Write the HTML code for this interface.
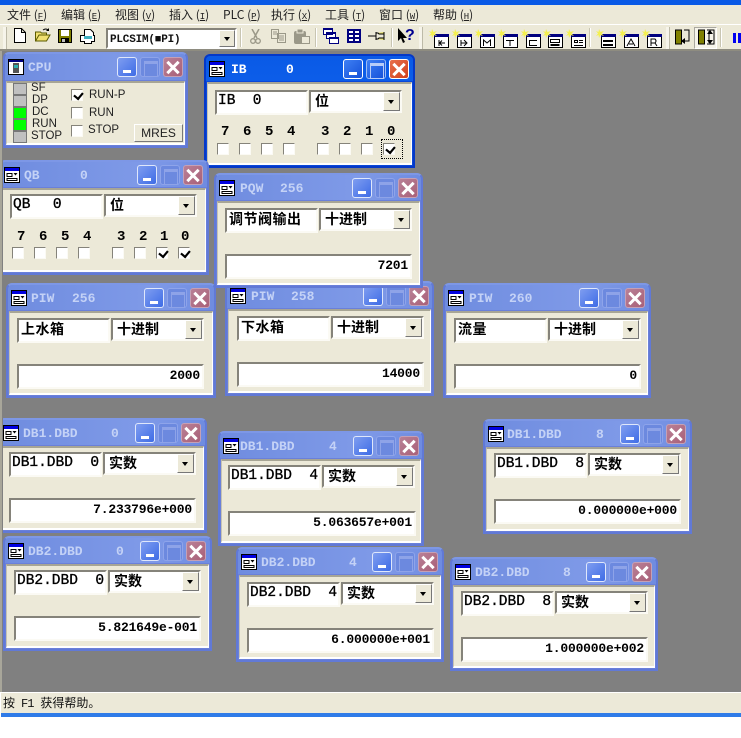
<!DOCTYPE html>
<html><head><meta charset="utf-8"><style>
*{box-sizing:border-box}
html,body{margin:0;padding:0;background:#fff}
body{width:741px;height:738px;position:relative;overflow:hidden;font-family:"Liberation Sans","WenQuanYi Zen Hei",sans-serif}
#top{position:absolute;left:0;top:0;width:741px;height:5px;background:#0a5ae6}
#menu{position:absolute;left:0;top:5px;width:741px;height:20px;background:#ece9d8;border-bottom:1px solid #fff}
#menu span{position:absolute;top:2px;font:12px/15px "WenQuanYi Zen Hei","Noto Sans CJK SC",sans-serif;color:#222;white-space:pre}
#menu u{font-family:"Liberation Mono",monospace;font-size:9px}
#tb{position:absolute;left:0;top:25px;width:741px;height:26px;background:#ece9d8;border-bottom:2px solid #8e8c80}
.sep{position:absolute;top:3px;width:2px;height:19px;background:#c8c5b2;border-right:1px solid #fff}
.gr{position:absolute;top:2px;width:4px;height:22px;background:#f6f4ea;border-right:1px solid #bdbaa8}
#tb svg{position:absolute}
#combo{position:absolute;left:106px;top:3px;width:131px;height:21px;background:#fff;border:2px solid;border-color:#85837a #fff #fff #85837a;font:bold 11px/20px "Liberation Mono",monospace;padding-left:2px;color:#111;letter-spacing:-.2px}
#combo i{position:absolute;right:0;top:0;width:16px;height:17px;background:#ece9d8;border:1px solid;border-color:#fff #777 #777 #fff}
#combo i:after,.cb i:after{content:"";position:absolute;left:4px;top:6px;border:3.5px solid transparent;border-top:4px solid #000;border-bottom:0}
#mdi{position:absolute;left:0;top:51px;width:741px;height:641px;background:#808080;overflow:hidden;border-left:2px solid #a8a69a}
#clip{position:absolute;left:3px;top:51px;width:738px;height:641px;overflow:hidden}
#stb{position:absolute;left:1px;top:692px;width:740px;height:21px;background:#ece9d8;border-top:1px solid #fff;font:12px/20px "WenQuanYi Zen Hei","Noto Sans CJK SC",sans-serif;color:#111;padding-left:2px;white-space:pre}
#stb span{font-family:"Liberation Mono",monospace;font-size:12px;margin:0 7px 0 6px;letter-spacing:-1px}
#bb{position:absolute;left:1px;top:713px;width:740px;height:4px;background:#2f7be8}
.w{position:absolute;width:210px;height:115px;border-radius:6px 6px 0 0;background:linear-gradient(90deg,#6f8cdf,#7f9ae8 70%,#6f8ce0);border:2px solid #6179d6;border-top-color:#7d97e6}
.w .c{position:absolute;left:1px;right:1px;top:26px;bottom:1px;background:#ece9d8;border-top:2px solid #a7a595;border-left:1px solid #c6c3b2;border-bottom:2px solid #fff;border-right:1px solid #fff;box-shadow:0 0 0 1px #6a80da}
.a{background:linear-gradient(180deg,#0a5ae6,#0f63ee 60%,#0a55dc);border-color:#0438c8}
.a .c{box-shadow:0 0 0 1px #0a48d8}
.ic{position:absolute;left:3px;top:5px;width:16px;height:16px}
.tt{position:absolute;top:6px;font:bold 13px/15px "Liberation Mono",monospace;color:#c4d2f6;white-space:pre}
.a .tt{color:#fff}
.b{position:absolute;top:3px;width:20px;height:20px;border-radius:3px;border:1px solid #a9bdf2}
.b1{left:136px;background:linear-gradient(135deg,#7f9df0,#3e6ce6);border-color:#dfe7fb}
.b2{left:159px;background:#6c89df;border-color:#8ea4ea}
.b3{left:182px;background:linear-gradient(135deg,#b98096,#a96078);border-color:#c5a0b5}
.b1:after{content:"";position:absolute;left:5px;bottom:3px;width:8px;height:3px;background:#fff}
.b2:after{content:"";position:absolute;left:3px;top:3px;width:12px;height:12px;border:1px solid #8ea3e8;border-top-width:3px}
.b3:before,.b3:after{content:"";position:absolute;left:1px;top:7.5px;width:16px;height:3px;background:#fff;transform:rotate(45deg)}
.b3:after{transform:rotate(-45deg)}
.a .b1{background:linear-gradient(135deg,#3f80f4,#1450d8);border-color:#fff}
.a .b2{background:linear-gradient(135deg,#3f80f4,#1450d8);border-color:#9cbcf4}
.a .b2:after{border-color:#b8cdf8}
.a .b3{background:linear-gradient(135deg,#e8704c,#d0401c);border-color:#fff}
.f{position:absolute;background:#fff;border:2px solid;border-color:#85837a #fbfaf4 #fbfaf4 #85837a;color:#000;white-space:pre;overflow:hidden}
.n{left:9px;top:7px;width:93px;height:25px;font:14.5px/18px "Liberation Mono",monospace;padding:0 0 0 1px;-webkit-text-stroke:.35px #000}
.z{font:bold 14px/18px "WenQuanYi Zen Hei","Noto Sans CJK SC",sans-serif;padding-left:2px;letter-spacing:.5px;-webkit-text-stroke:0}
.cb{left:103px;top:7px;width:93px;height:23px;font:bold 14px/19px "WenQuanYi Zen Hei","Noto Sans CJK SC",sans-serif;padding-left:4px}
.cb i{position:absolute;right:0;top:0;width:17px;height:19px;background:#ece9d8;border:1px solid;border-color:#fff #777 #777 #fff}
.cb i:after{left:4px;top:7px}
.v{left:9px;top:53px;width:187px;height:25px;text-align:right;font:bold 13px/19px "Liberation Mono",monospace;padding-right:2px;letter-spacing:-.2px}
.k{position:absolute;width:12px;height:12px;background:#fff;border:1px solid;border-color:#85837a #fbfaf4 #fbfaf4 #85837a;outline:1px solid #ece9d8}
.k.x:after{content:"";position:absolute;left:2px;top:-1px;width:6px;height:9px;border:solid #000;border-width:0 3px 3px 0;transform:rotate(40deg) scale(.72)}
.l{position:absolute;font:bold 14px/14px "Liberation Mono",monospace;color:#000}
.cpu{position:absolute;font:11.5px/12px "Liberation Sans",sans-serif;color:#222}
.led{position:absolute;width:14px;height:12px;background:#c0c0c0;border:1px solid #777}
.g{background:#00ff00}
</style></head><body>
<svg width="0" height="0" style="position:absolute"><defs>
<symbol id="wi" viewBox="0 0 16 16"><rect x=".5" y=".5" width="15" height="15" fill="#fff" stroke="#000"/><rect x="1" y="1" width="14" height="3" fill="#0000e0"/><path d="M3 6.5h5v3H3zM3 11.5h10v2H3z" fill="none" stroke="#000"/><path d="M9.500 6h4l-2 2.500z" fill="#000"/></symbol>
<symbol id="star" viewBox="0 0 20 20"><path d="M5.500 6.500h14v12h-14z" fill="#fff" stroke="#000"/><rect x="5" y="5" width="15" height="3" fill="#000080"/><path d="M3 0l1.500 3L8 2 5.500 4.500 8 7 4.500 6 3 9 2.500 6 0 7l2-2.500L0 2l2.500 1z" fill="#f4f050"/></symbol>
</defs></svg>
<div id="top"></div>
<div id="menu">
<span style="left:7px">文件 (<u>F</u>)</span><span style="left:61px">编辑 (<u>E</u>)</span><span style="left:115px">视图 (<u>V</u>)</span><span style="left:169px">插入 (<u>I</u>)</span><span style="left:223px">PLC (<u>P</u>)</span><span style="left:271px">执行 (<u>X</u>)</span><span style="left:325px">工具 (<u>T</u>)</span><span style="left:379px">窗口 (<u>W</u>)</span><span style="left:433px">帮助 (<u>H</u>)</span>
</div>
<div id="tb">
<div class="gr" style="left:3px"></div>
<svg style="left:14px;top:3px" width="12" height="15"><path d="M.5.5h7l4 4v10H.5zM7.500.5v4h4" fill="#fff" stroke="#000"/></svg>
<svg style="left:35px;top:3px" width="16" height="14"><path d="M.5 13V4h5l1 1h5v2H4L.5 13h11L15 7H4" fill="#f0e070" stroke="#5a5a00"/><path d="M8 2q3-2 5 0" fill="none" stroke="#000"/><path d="M14 0v3h-3z"/></svg>
<svg style="left:58px;top:4px" width="14" height="14"><rect width="14" height="14" fill="#000"/><rect x="1" y="1" width="12" height="12" fill="#808000"/><rect x="3" y="1" width="8" height="6" fill="#fff"/><rect x="3" y="9" width="8" height="5" fill="#000"/><rect x="4" y="10" width="3" height="3" fill="#c0c0c0"/></svg>
<svg style="left:80px;top:4px" width="15" height="15"><path d="M4.500.5h6l3 3v3h1v6h-3v2h-7v-2H.5v-6h4z" fill="#fff" stroke="#000"/><rect x="4" y="7" width="8" height="3" fill="#40b0c0"/></svg>
<div id="combo">PLCSIM(■PI)<i></i></div>
<div class="sep" style="left:240px"></div>
<svg style="left:250px;top:4px" width="11" height="15"><path d="M2 0l5 9M9 0L4 9" stroke="#9a9888" fill="none" stroke-width="1.500"/><circle cx="3" cy="12" r="2.300" fill="none" stroke="#9a9888" stroke-width="1.300"/><circle cx="8" cy="12" r="2.300" fill="none" stroke="#9a9888" stroke-width="1.300"/></svg>
<svg style="left:271px;top:4px" width="16" height="14"><path d="M.5.5h7v9h-7zM6.500 4.500h8v9h-8z" fill="#ece9d8" stroke="#9a9888"/><path d="M8 7h5M8 9h5M8 11h5M2 3h4M2 5h4" stroke="#9a9888"/></svg>
<svg style="left:294px;top:4px" width="16" height="15"><rect y="2" width="12" height="13" rx="2" fill="#9a9888"/><rect x="3" width="6" height="4" fill="#9a9888" stroke="#ece9d8"/><rect x="7.500" y="7.500" width="8" height="7" fill="#ece9d8" stroke="#9a9888"/></svg>
<div class="sep" style="left:315px"></div>
<svg style="left:323px;top:3px" width="16" height="16"><g fill="#fff" stroke="#000080"><path d="M.5.5h9v6h-9zM3.500 4.500h9v6h-9zM6.500 9.500h9v6h-9z"/></g><path d="M0 0h10v2H0zM3 4h10v2H3zM6 9h10v2H6z" fill="#000080"/></svg>
<svg style="left:347px;top:4px" width="14" height="14"><rect x="1" y="1" width="12" height="12" fill="#fff" stroke="#000080" stroke-width="2"/><path d="M1 5h12M1 9h12M7 1v12" stroke="#000080" stroke-width="2"/></svg>
<svg style="left:368px;top:6px" width="17" height="10"><path d="M0 5h8" stroke="#000"/><path d="M8 1v8M8 2h2l1 1h5V1M8 8h2l1-1h5v2M16 1v8" stroke="#000" fill="#e8e070"/></svg>
<div class="sep" style="left:391px"></div>
<svg style="left:398px;top:3px" width="17" height="17"><path d="M0 0v13l3-3 2 5 2-1-2-4h4z" fill="#000"/><text x="7" y="12" font-family="Liberation Sans" font-weight="bold" font-size="16" fill="#000090">?</text></svg>
<div class="gr" style="left:419px"></div>
<svg style="left:429px;top:4px" width="20" height="20"><use href="#star"/><path d="M10 11v6M16 14h-5M13 11.500L10.500 14l2.500 2.500" fill="none" stroke="#000"/></svg>
<svg style="left:452px;top:4px" width="20" height="20"><use href="#star"/><path d="M9 11v6M9 14h5M12 11l3 3-3 3" fill="none" stroke="#000"/></svg>
<svg style="left:475px;top:4px" width="20" height="20"><use href="#star"/><path d="M8.500 17v-6l3.500 3 3.500-3v6" fill="none" stroke="#000"/></svg>
<svg style="left:498px;top:4px" width="20" height="20"><use href="#star"/><path d="M8 11.500h8M12 11.500v5.500" fill="none" stroke="#000"/></svg>
<svg style="left:521px;top:4px" width="20" height="20"><use href="#star"/><path d="M16 11.500H8.500v5H16" fill="none" stroke="#000"/></svg>
<svg style="left:543px;top:4px" width="20" height="20"><use href="#star"/><rect x="7.500" y="10.500" width="9" height="3" fill="none" stroke="#000"/><rect x="7.500" y="15" width="9" height="2" fill="#000"/></svg>
<svg style="left:566px;top:4px" width="20" height="20"><use href="#star"/><path d="M8.500 11.500h3v2h-3zM13 11.500h4M13 13.500h4M8 16.500h9" fill="none" stroke="#000"/></svg>
<div class="sep" style="left:589px"></div>
<svg style="left:596px;top:4px" width="20" height="20"><use href="#star"/><path d="M7 11h10v2H7zM7 15h10v2H7z"/></svg>
<svg style="left:619px;top:4px" width="20" height="20"><use href="#star"/><path d="M8 17l4-7 4 7M10 15h4" fill="none" stroke="#000"/></svg>
<svg style="left:642px;top:4px" width="20" height="20"><use href="#star"/><path d="M9 17v-7h4q2 2 0 4H9m4 0l2 3" fill="none" stroke="#000"/></svg>
<div class="gr" style="left:666px"></div>
<svg style="left:675px;top:4px" width="16" height="16"><rect x=".5" y="1" width="6" height="14" fill="#808000" stroke="#000"/><path d="M9 1h5v11H9" fill="none" stroke="#000"/><path d="M6 12l4-3v6z"/></svg>
<div style="position:absolute;left:694px;top:2px;width:23px;height:22px;background:#f6f4ea;border:1px solid;border-color:#aaa8a0 #fff #fff #aaa8a0"></div>
<svg style="left:698px;top:4px" width="18" height="17"><rect x=".5" y="1" width="6" height="14" fill="#808000" stroke="#000"/><path d="M9 1h7v14H9M11 2v12" fill="none" stroke="#000"/><path d="M11 1l3 4H8zM11 15l3-4H8z" transform="translate(1 0)"/></svg>
<div class="sep" style="left:720px"></div>
<div style="position:absolute;left:733px;top:8px;width:3px;height:10px;background:#0000f0"></div><div style="position:absolute;left:738px;top:8px;width:3px;height:10px;background:#0000f0"></div>
</div>
<div id="mdi"></div>
<div id="clip"><div style="position:absolute;left:-3px;top:-51px;width:741px;height:738px">

<div class="w" style="left:3px;top:52px;width:185px;height:96px">
<svg class="ic" style="left:3px" viewBox="0 0 16 16"><rect x=".5" y=".5" width="15" height="15" fill="#fff" stroke="#000"/><rect x="1" y="1" width="14" height="2" fill="#000080"/><rect x="5" y="4" width="6" height="10" fill="#555"/><rect x="6" y="6" width="4" height="3" fill="#30b0b0"/></svg>
<span class="tt" style="left:23px">CPU</span>
<div class="b b1" style="left:112px"></div><div class="b b2" style="left:135px"></div><div class="b b3" style="left:158px"></div>
<div class="c" style="top:27px"></div>
<div class="led" style="left:8px;top:29px"></div><div class="led" style="left:8px;top:41px"></div><div class="led g" style="left:8px;top:53px"></div><div class="led g" style="left:8px;top:65px"></div><div class="led" style="left:8px;top:77px"></div>
<span class="cpu" style="left:26px;top:28px">SF</span><span class="cpu" style="left:27px;top:40px">DP</span><span class="cpu" style="left:27px;top:52px">DC</span><span class="cpu" style="left:27px;top:64px">RUN</span><span class="cpu" style="left:26px;top:76px">STOP</span>
<div class="k x" style="left:66px;top:35px"></div><div class="k" style="left:66px;top:53px"></div><div class="k" style="left:66px;top:71px"></div>
<span class="cpu" style="left:84px;top:35px">RUN-P</span><span class="cpu" style="left:84px;top:53px">RUN</span><span class="cpu" style="left:83px;top:70px">STOP</span>
<div style="position:absolute;left:129px;top:70px;width:49px;height:18px;background:#ece9d8;border:1px solid;border-color:#fff #777 #777 #fff;text-align:center;font:12px/16px 'Liberation Sans',sans-serif;color:#222">MRES</div>
</div>

<div class="w a" style="left:204px;top:54px;width:211px;height:114px">
<svg class="ic"><use href="#wi"/></svg><span class="tt" style="left:25px">IB</span><span class="tt" style="left:80px">0</span>
<div class="b b1" style="left:137px"></div><div class="b b2" style="left:160px"></div><div class="b b3" style="left:183px"></div>
<div class="c"></div>
<div class="f n" style="left:9px;top:34px">IB  0</div><div class="f cb" style="left:103px;top:34px">位<i></i></div>
<span class="l" style="left:15px;top:69px">7</span><span class="l" style="left:37px;top:69px">6</span><span class="l" style="left:59px;top:69px">5</span><span class="l" style="left:81px;top:69px">4</span><span class="l" style="left:115px;top:69px">3</span><span class="l" style="left:137px;top:69px">2</span><span class="l" style="left:159px;top:69px">1</span><span class="l" style="left:181px;top:69px">0</span>
<div class="k" style="left:11px;top:87px"></div><div class="k" style="left:33px;top:87px"></div><div class="k" style="left:55px;top:87px"></div><div class="k" style="left:77px;top:87px"></div><div class="k" style="left:111px;top:87px"></div><div class="k" style="left:133px;top:87px"></div><div class="k" style="left:155px;top:87px"></div><div class="k x" style="left:177px;top:87px"></div>
<div style="position:absolute;left:175px;top:83px;width:22px;height:20px;border:1px dotted #000"></div>
</div>

<div class="w" style="left:-1px;top:160px;height:115px">
<svg class="ic"><use href="#wi"/></svg><span class="tt" style="left:23px">QB</span><span class="tt" style="left:79px">0</span>
<div class="b b1"></div><div class="b b2"></div><div class="b b3"></div><div class="c"></div>
<div class="f n" style="left:9px;top:32px">QB  <span style="margin-left:5px">0</span></div><div class="f cb" style="top:32px">位<i></i></div>
<span class="l" style="left:16px;top:68px">7</span><span class="l" style="left:38px;top:68px">6</span><span class="l" style="left:60px;top:68px">5</span><span class="l" style="left:82px;top:68px">4</span><span class="l" style="left:116px;top:68px">3</span><span class="l" style="left:138px;top:68px">2</span><span class="l" style="left:159px;top:68px">1</span><span class="l" style="left:180px;top:68px">0</span>
<div class="k" style="left:11px;top:85px"></div><div class="k" style="left:33px;top:85px"></div><div class="k" style="left:55px;top:85px"></div><div class="k" style="left:77px;top:85px"></div><div class="k" style="left:111px;top:85px"></div><div class="k" style="left:133px;top:85px"></div><div class="k x" style="left:155px;top:85px"></div><div class="k x" style="left:177px;top:85px"></div>
</div>

<div class="w" style="left:225px;top:281px;width:209px"><svg class="ic"><use href="#wi"/></svg><span class="tt" style="left:24px">PIW</span><span class="tt" style="left:64px">258</span><div class="b b1"></div><div class="b b2"></div><div class="b b3"></div><div class="c"></div><div class="f n z" style="left:10px;top:33px">下水箱</div><div class="f cb" style="left:104px;top:33px">十进制<i></i></div><div class="f v" style="left:10px;top:79px">14000</div></div>

<div class="w" style="left:214px;top:173px;width:209px"><svg class="ic"><use href="#wi"/></svg><span class="tt" style="left:24px">PQW</span><span class="tt" style="left:64px">256</span><div class="b b1"></div><div class="b b2"></div><div class="b b3"></div><div class="c"></div><div class="f n z" style="left:9px;top:33px">调节阀输出</div><div class="f cb" style="left:103px;top:33px">十进制<i></i></div><div class="f v" style="left:9px;top:79px">7201</div></div>

<div class="w" style="left:6px;top:283px"><svg class="ic"><use href="#wi"/></svg><span class="tt" style="left:23px">PIW</span><span class="tt" style="left:64px">256</span><div class="b b1"></div><div class="b b2"></div><div class="b b3"></div><div class="c"></div><div class="f n z" style="top:33px">上水箱</div><div class="f cb" style="top:33px">十进制<i></i></div><div class="f v" style="top:79px">2000</div></div>

<div class="w" style="left:443px;top:283px;width:208px"><svg class="ic"><use href="#wi"/></svg><span class="tt" style="left:24px">PIW</span><span class="tt" style="left:64px">260</span><div class="b b1" style="left:134px"></div><div class="b b2" style="left:157px"></div><div class="b b3" style="left:180px"></div><div class="c"></div><div class="f n z" style="top:33px">流量</div><div class="f cb" style="top:33px">十进制<i></i></div><div class="f v" style="top:79px">0</div></div>

<div class="w" style="left:-2px;top:418px;width:209px"><svg class="ic"><use href="#wi"/></svg><span class="tt" style="left:23px">DB1.DBD</span><span class="tt" style="left:111px">0</span><div class="b b1" style="left:135px"></div><div class="b b2" style="left:158px"></div><div class="b b3" style="left:181px"></div><div class="c"></div><div class="f n" style="top:32px">DB1.DBD  0</div><div class="f cb" style="top:32px">实数<i></i></div><div class="f v" style="top:78px">7.233796e+000</div></div>

<div class="w" style="left:218px;top:431px;width:206px"><svg class="ic"><use href="#wi"/></svg><span class="tt" style="left:20px">DB1.DBD</span><span class="tt" style="left:109px">4</span><div class="b b1" style="left:133px"></div><div class="b b2" style="left:156px"></div><div class="b b3" style="left:179px"></div><div class="c"></div><div class="f n" style="left:8px;top:32px">DB1.DBD  4</div><div class="f cb" style="left:102px;top:32px">实数<i></i></div><div class="f v" style="left:8px;width:188px;top:78px">5.063657e+001</div></div>

<div class="w" style="left:483px;top:419px;width:209px"><svg class="ic"><use href="#wi"/></svg><span class="tt" style="left:22px">DB1.DBD</span><span class="tt" style="left:111px">8</span><div class="b b1" style="left:135px"></div><div class="b b2" style="left:158px"></div><div class="b b3" style="left:181px"></div><div class="c"></div><div class="f n" style="top:32px">DB1.DBD  8</div><div class="f cb" style="top:32px">实数<i></i></div><div class="f v" style="top:78px">0.000000e+000</div></div>

<div class="w" style="left:3px;top:536px;width:209px"><svg class="ic"><use href="#wi"/></svg><span class="tt" style="left:23px">DB2.DBD</span><span class="tt" style="left:111px">0</span><div class="b b1" style="left:135px"></div><div class="b b2" style="left:158px"></div><div class="b b3" style="left:181px"></div><div class="c"></div><div class="f n" style="top:32px">DB2.DBD  0</div><div class="f cb" style="top:32px">实数<i></i></div><div class="f v" style="top:78px">5.821649e-001</div></div>

<div class="w" style="left:236px;top:547px;width:208px"><svg class="ic"><use href="#wi"/></svg><span class="tt" style="left:23px">DB2.DBD</span><span class="tt" style="left:111px">4</span><div class="b b1" style="left:134px"></div><div class="b b2" style="left:157px"></div><div class="b b3" style="left:180px"></div><div class="c"></div><div class="f n" style="top:33px">DB2.DBD  4</div><div class="f cb" style="top:33px">实数<i></i></div><div class="f v" style="top:79px">6.000000e+001</div></div>

<div class="w" style="left:450px;top:557px;width:208px;height:114px"><svg class="ic"><use href="#wi"/></svg><span class="tt" style="left:23px">DB2.DBD</span><span class="tt" style="left:111px">8</span><div class="b b1" style="left:134px"></div><div class="b b2" style="left:157px"></div><div class="b b3" style="left:180px"></div><div class="c"></div><div class="f n" style="top:32px">DB2.DBD  8</div><div class="f cb" style="top:32px">实数<i></i></div><div class="f v" style="top:78px">1.000000e+002</div></div>

</div></div>
<div id="stb">按<span>F1</span>获得帮助。</div>
<div id="bb"></div>
</body></html>
